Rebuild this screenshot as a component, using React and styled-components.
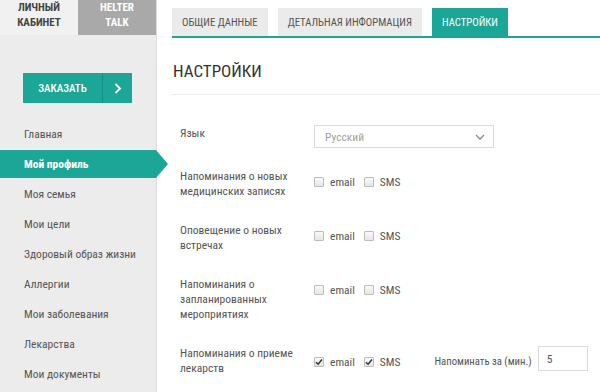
import React from 'react';
import styled, { createGlobalStyle } from 'styled-components';

const teal = '#1ba698';

const GlobalStyle = createGlobalStyle`
  html, body { margin: 0; padding: 0; }
  *, *::before, *::after { box-sizing: border-box; }
  body {
    font-family: "Roboto Condensed", Roboto, "Liberation Sans", sans-serif;
    background: #fff;
    color: #555;
  }
`;

const Page = styled.div`
  display: flex;
  width: 600px;
  height: 392px;
  overflow: hidden;
`;

const Sidebar = styled.aside`
  width: 157px;
  flex-shrink: 0;
  background: #ececec;
  border-right: 1px solid #dcdcdc;
  display: flex;
  flex-direction: column;
`;

const Brand = styled.div`
  display: flex;
  height: 35px;
`;

const BrandTab = styled.div`
  flex: 1;
  display: flex;
  align-items: center;
  justify-content: center;
  text-align: center;
  font-size: 11px;
  font-weight: 700;
  line-height: 15px;
  text-transform: uppercase;
  background: ${p => (p.$muted ? '#a9a9a9' : '#f1f1f1')};
  color: ${p => (p.$muted ? '#fff' : '#444')};
  padding-bottom: 6px;
`;

const OrderButton = styled.button`
  margin: 38px 0 0 23px;
  width: 109px;
  height: 30px;
  border: none;
  padding: 0;
  background: ${teal};
  color: #fff;
  display: flex;
  font-family: inherit;
  font-size: 11px;
  font-weight: 500;
  text-transform: uppercase;
  cursor: pointer;
`;

const OrderLabel = styled.span`
  flex: 1;
  display: flex;
  align-items: center;
  justify-content: center;
`;

const OrderArrow = styled.span`
  width: 30px;
  border-left: 1px solid #168f83;
  display: flex;
  align-items: center;
  justify-content: center;
`;

const Nav = styled.nav`
  margin-top: 17px;
  display: flex;
  flex-direction: column;
`;

const NavItem = styled.div`
  position: relative;
  height: 28px;
  margin-bottom: 2px;
  padding-left: 24px;
  display: flex;
  align-items: center;
  font-size: 11.5px;
  color: ${p => (p.$active ? '#fff' : '#555')};
  font-weight: ${p => (p.$active ? 700 : 400)};
  background: ${p => (p.$active ? teal : 'transparent')};
  &::after {
    content: '';
    display: ${p => (p.$active ? 'block' : 'none')};
    position: absolute;
    top: 0;
    right: -12px;
    width: 12px;
    height: 28px;
    background: ${teal};
    clip-path: polygon(0 0, 100% 50%, 0 100%);
  }
`;

const Main = styled.main`
  flex: 1;
  padding: 8px 0 0 15px;
  display: flex;
  flex-direction: column;
`;

const Tabs = styled.div`
  display: flex;
  gap: 10px;
  border-bottom: 2px solid ${teal};
`;

const Tab = styled.div`
  height: 28px;
  padding: 0 10px;
  display: flex;
  align-items: center;
  font-size: 10.7px;
  text-transform: uppercase;
  background: ${p => (p.$active ? teal : '#ebebeb')};
  color: ${p => (p.$active ? '#fff' : '#555')};
`;

const Title = styled.h2`
  margin: 23px 0 0 1px;
  font-size: 17px;
  font-weight: 400;
  color: #333;
  line-height: 20px;
`;

const Divider = styled.div`
  margin-top: 13px;
  height: 1px;
  background: #ececec;
`;

const Form = styled.div`
  padding: 30px 0 0 8px;
  display: flex;
  flex-direction: column;
  gap: 24px;
`;

const Row = styled.div`
  display: flex;
  align-items: flex-start;
  margin-bottom: ${p => p.$tight || 0}px;
`;

const Label = styled.div`
  width: 134px;
  flex-shrink: 0;
  font-size: 11.5px;
  line-height: 15px;
  color: #555;
  padding-top: ${p => p.$pad || 0}px;
`;

const Select = styled.div`
  width: 180px;
  height: 23px;
  border: 1px solid #dadada;
  display: flex;
  align-items: center;
  justify-content: space-between;
  padding: 0 8px 0 10px;
  font-size: 11.5px;
  color: #a0a0a0;
`;

const Options = styled.div`
  display: flex;
  align-items: center;
  padding-top: 6px;
  white-space: nowrap;
`;

const Check = styled.span`
  width: 10px;
  height: 10px;
  border: 1px solid #bdbdbd;
  background: linear-gradient(#fafafa, #e6e6e6);
  border-radius: 1px;
  display: flex;
  align-items: center;
  justify-content: center;
  margin-right: 6px;
`;

const OptionText = styled.span`
  font-size: 11.5px;
  color: #555;
  margin-right: 9px;
`;

const RemindLabel = styled.span`
  margin-left: 25px;
  font-size: 10.7px;
  color: #555;
`;

const NumberBox = styled.div`
  margin-left: 6px;
  margin-top: -6px;
  width: 50px;
  height: 25px;
  border: 1px solid #dadada;
  display: flex;
  align-items: center;
  padding-left: 8px;
  font-size: 11.5px;
  color: #555;
`;

const Tick = () => (
  <svg width="8" height="8" viewBox="0 0 8 8">
    <path d="M1 4.2 L3.1 6.2 L7 1.5" fill="none" stroke="#333" strokeWidth="1.5" />
  </svg>
);

const Choice = ({ checked, children }) => (
  <>
    <Check>{checked && <Tick />}</Check>
    <OptionText>{children}</OptionText>
  </>
);

const navItems = [
  'Главная',
  'Мой профиль',
  'Моя семья',
  'Мои цели',
  'Здоровый образ жизни',
  'Аллергии',
  'Мои заболевания',
  'Лекарства',
  'Мои документы',
];

const rows = [
  { label: ['Напоминания о новых', 'медицинских записях'] },
  { label: ['Оповещение о новых', 'встречах'] },
  { label: ['Напоминания о', 'запланированных', 'мероприятиях'] },
];

export default function App() {
  return (
    <>
      <GlobalStyle />
      <Page>
        <Sidebar>
          <Brand>
            <BrandTab>Личный<br />кабинет</BrandTab>
            <BrandTab $muted>Helter<br />talk</BrandTab>
          </Brand>
          <OrderButton>
            <OrderLabel>Заказать</OrderLabel>
            <OrderArrow>
              <svg width="8" height="11" viewBox="0 0 8 11">
                <path d="M1.5 1 L6 5.5 L1.5 10" fill="none" stroke="#fff" strokeWidth="1.8" />
              </svg>
            </OrderArrow>
          </OrderButton>
          <Nav>
            {navItems.map(item => (
              <NavItem key={item} $active={item === 'Мой профиль'}>{item}</NavItem>
            ))}
          </Nav>
        </Sidebar>
        <Main>
          <Tabs>
            <Tab>Общие данные</Tab>
            <Tab>Детальная информация</Tab>
            <Tab $active>Настройки</Tab>
          </Tabs>
          <Title>НАСТРОЙКИ</Title>
          <Divider />
          <Form>
            <Row $tight={-3}>
              <Label $pad={1}>Язык</Label>
              <Select>
                Русский
                <svg width="10" height="6" viewBox="0 0 10 6">
                  <path d="M1 1 L5 5 L9 1" fill="none" stroke="#888" strokeWidth="1.3" />
                </svg>
              </Select>
            </Row>
            {rows.map(r => (
              <Row key={r.label[0]}>
                <Label>{r.label.map(l => <div key={l}>{l}</div>)}</Label>
                <Options>
                  <Choice>email</Choice>
                  <Choice>SMS</Choice>
                </Options>
              </Row>
            ))}
            <Row>
              <Label><div>Напоминания о приеме</div><div>лекарств</div></Label>
              <Options>
                <Choice checked>email</Choice>
                <Choice checked>SMS</Choice>
                <RemindLabel>Напоминать за (мин.)</RemindLabel>
                <NumberBox>5</NumberBox>
              </Options>
            </Row>
          </Form>
        </Main>
      </Page>
    </>
  );
}
